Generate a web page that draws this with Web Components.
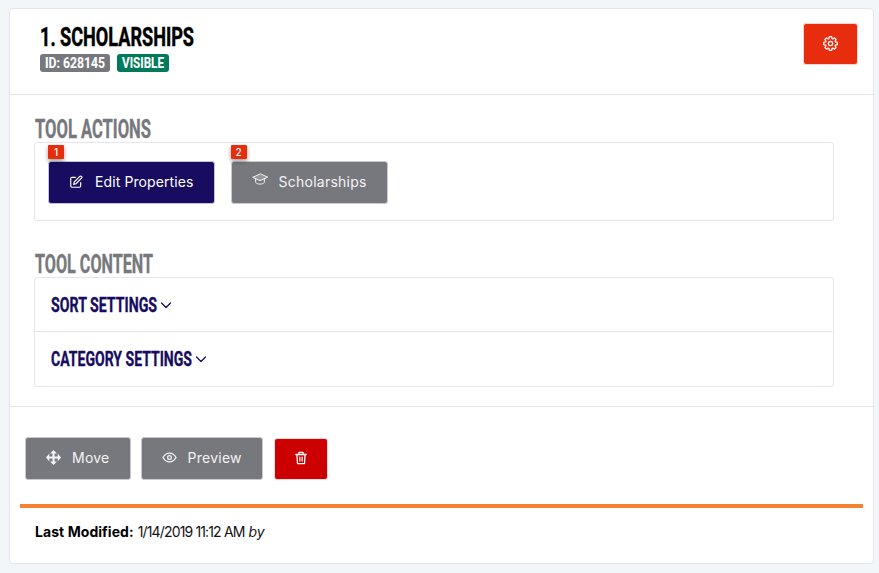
<!DOCTYPE html>
<html>
<head>
<meta charset="utf-8">
<style>
  html, body { margin: 0; height: 573px; overflow: hidden; background: #f3f6f9; }
  body { padding: 8px 5px 8px 9px; box-sizing: border-box; font-family: "Inter", "Liberation Sans", sans-serif; }
</style>
</head>
<body>
<tool-card></tool-card>

<script>
// cog outline with 8 teeth
function gearPath() {
  let d = '';
  for (let i = 0; i < 8; i++) {
    const a = i * Math.PI / 4;
    [[-.32, 8.2], [-.17, 11], [.17, 11], [.32, 8.2]].forEach(([o, r]) => {
      const x = 12 + r * Math.sin(a + o), y = 12 - r * Math.cos(a + o);
      d += (d ? 'L' : 'M') + x.toFixed(2) + ' ' + y.toFixed(2);
    });
  }
  return d + 'z';
}

const ICONS = {
  gear: `<path d="${gearPath()}"/><circle cx="12" cy="12" r="3.4"/>`,
  edit: '<path d="M11 4H5a2 2 0 0 0-2 2v13a2 2 0 0 0 2 2h13a2 2 0 0 0 2-2v-6"/><path d="M18.5 2.5a2.1 2.1 0 0 1 3 3L12 15l-4 1 1-4z"/>',
  grad: '<path d="M12 3L1 8l11 5 11-5z" fill="currentColor" fill-opacity=".25"/><path d="M5.500 10.500v5c2 3.500 11 3.500 13 0v-5"/>',
  move: '<path fill="currentColor" stroke="none" d="M12 0l5.500 5.500h-3.800v5h5V5.500L24 12l-5.300 6.500v-5h-5v5h3.800L12 24l-5.500-5.500h3.800v-5h-5v5L0 12l5.300-6.500v5h5v-5H6.500z"/>',
  eye: '<path d="M1.500 12S5.500 5 12 5s10.500 7 10.500 7-4 7-10.500 7S1.500 12 1.500 12z"/><circle cx="12" cy="12" r="3"/>',
  trash: '<path d="M3 6h18"/><path d="M8.500 6V2.500h7V6"/><path d="M5 6l1 15.500h12L19 6"/><path d="M10 10.500v6.500M14 10.500v6.500"/>',
  chevron: '<path d="M3 8l9 9 9-9"/>'
};

class UiIcon extends HTMLElement {
  connectedCallback() {
    const size = this.getAttribute('size') || 14;
    const sw = this.getAttribute('weight') || 2;
    this.attachShadow({ mode: 'open' }).innerHTML = `
      <style>:host { display: inline-flex; } svg { display: block; }</style>
      <svg width="${size}" height="${size}" viewBox="0 0 24 24" fill="none" stroke="currentColor"
        stroke-width="${sw}" stroke-linecap="round" stroke-linejoin="round">${ICONS[this.getAttribute('name')]}</svg>`;
  }
}
customElements.define('ui-icon', UiIcon);

// heading font is condensed, none installed, so squeeze the text to the wanted width
class CondText extends HTMLElement {
  connectedCallback() {
    const w = +this.getAttribute('w');
    this.attachShadow({ mode: 'open' }).innerHTML = `
      <style>
        :host { display: inline-block; width: ${w}px; white-space: nowrap; font-family: Roboto, "Liberation Sans", sans-serif;
          font-weight: 700; -webkit-text-stroke: var(--stroke, .35px) currentColor; }
        span { display: inline-block; transform-origin: 0 50%; }
      </style>
      <span><slot></slot></span>`;
    const span = this.shadowRoot.querySelector('span');
    span.style.transform = `scaleX(${w / span.getBoundingClientRect().width})`;
  }
}
customElements.define('cond-text', CondText);

class UiButton extends HTMLElement {
  connectedCallback() {
    const num = this.getAttribute('num');
    this.attachShadow({ mode: 'open' }).innerHTML = `
      <style>
        :host { display: inline-flex; position: relative; height: 43px; box-sizing: border-box; align-items: center;
          gap: var(--gap, 12px); padding: 0 var(--pad, 20px) 2px; border: 1px solid #c9c9ce; border-radius: 3px;
          background: #77787d; color: #f3f3f5; font-size: 14px; letter-spacing: .25px; white-space: nowrap; }
        :host([kind="navy"]) { background: #170c60; border-color: #c5c1e3; color: #fff; letter-spacing: .1px; }
        :host([kind="red"]) { background: #e82c0e; border-color: #fbd3cb; color: #fff; height: 42px; }
        :host([kind="dark-red"]) { background: #cc0000; border-color: #f6dddd; color: #fff; height: 42px; }
        .num { position: absolute; left: -1px; top: -17px; width: 16px; height: 14px; background: #e82c0e; color: #fff;
          font-size: 10px; font-weight: 500; line-height: 14px; text-align: center; border-radius: 1px; letter-spacing: 0;
          box-shadow: 0 2px 4px rgba(0,0,0,.4); }
      </style>
      ${num ? `<span class="num">${num}</span>` : ''}<slot></slot>`;
  }
}
customElements.define('ui-button', UiButton);

class UiSection extends HTMLElement {
  connectedCallback() {
    this.attachShadow({ mode: 'open' }).innerHTML = `
      <style>
        :host { display: block; width: 800px; }
        h3 { margin: 0; height: 24px; padding-left: 1px; font-size: 25px; line-height: 23px; font-weight: 700; color: #77787d; }
        .box { border: 1px solid #e4e6ef; border-radius: 3px; background: #fff; }
      </style>
      <h3><cond-text w="${this.getAttribute('w')}">${this.getAttribute('heading')}</cond-text></h3>
      <div class="box"><slot></slot></div>`;
  }
}
customElements.define('ui-section', UiSection);

class UiRow extends HTMLElement {
  connectedCallback() {
    this.attachShadow({ mode: 'open' }).innerHTML = `
      <style>
        :host { display: flex; align-items: center; gap: 3px; height: 54px; box-sizing: border-box; padding-left: 16px; color: #170c60; font-size: 21px; }
        :host(:not(:last-child)) { border-bottom: 1px solid #e4e6ef; }
      </style>
      <cond-text w="${this.getAttribute('w')}"><slot></slot></cond-text><ui-icon name="chevron" size="12" weight="2.600"></ui-icon>`;
  }
}
customElements.define('ui-row', UiRow);

class ToolCard extends HTMLElement {
  connectedCallback() {
    this.attachShadow({ mode: 'open' }).innerHTML = `
      <style>
        :host { display: block; height: 556px; box-sizing: border-box; background: #fff; border: 1px solid #e4e6ef; border-radius: 4px; }
        header { display: flex; justify-content: space-between; height: 86px; box-sizing: border-box;
          padding: 14px 15px 0 30px; border-bottom: 1px solid #e4e6ef; }
        h2 { margin: 1px 0 0; font-size: 26px; line-height: 26px; color: #000; --stroke: .5px; }
        .tags { display: flex; gap: 7px; margin-top: 4px; }
        .tag { height: 18px; padding: 0 5px; border-radius: 3px; background: #77787d; color: #fff; font-size: 15px; line-height: 18px; --stroke: .1px; }
        .tag.green { background: #007a5a; }
        main { height: 312px; box-sizing: border-box; padding: 23px 0 0 24px; border-bottom: 1px solid #e4e6ef; }
        .actions { display: flex; gap: 16px; height: 77px; box-sizing: border-box; padding: 18px 0 0 13px; }
        ui-section + ui-section { margin-top: 32px; }
        .foot { display: flex; gap: 10px; padding: 30px 0 0 15px; align-items: flex-start; height: 43px; }
        .foot ui-button:nth-child(3) { margin: 1px 0 0 1px; width: 54px; justify-content: center; }
        hr { height: 4px; margin: 24px 10px 0; border: 0; background: #f58233; }
        .mod { margin: 15px 0 0 25px; font-size: 14px; color: #111; }
        .mod b { color: #000; letter-spacing: .06px; }
        .date { letter-spacing: -.85px; }
      </style>
      <header>
        <div>
          <h2><cond-text w="154">1. SCHOLARSHIPS</cond-text></h2>
          <div class="tags"><span class="tag"><cond-text w="60">ID: 628145</cond-text></span><span class="tag green"><cond-text w="42">VISIBLE</cond-text></span></div>
        </div>
        <ui-button kind="red" style="width:55px;justify-content:center"><ui-icon name="gear" size="15"></ui-icon></ui-button>
      </header>
      <main>
        <ui-section heading="TOOL ACTIONS" w="116">
          <div class="actions">
            <ui-button kind="navy" num="1"><ui-icon name="edit" size="14"></ui-icon>Edit Properties</ui-button>
            <ui-button num="2" style="--gap:11px"><ui-icon name="grad" size="16" weight="1.500" style="margin-top:-3px"></ui-icon>Scholarships</ui-button>
          </div>
        </ui-section>
        <ui-section heading="TOOL CONTENT" w="118">
          <ui-row w="106">SORT SETTINGS</ui-row>
          <ui-row w="141">CATEGORY SETTINGS</ui-row>
        </ui-section>
      </main>
      <div class="foot">
        <ui-button style="--gap:11px"><ui-icon name="move" size="15"></ui-icon>Move</ui-button>
        <ui-button style="--gap:11px"><ui-icon name="eye" size="15"></ui-icon>Preview</ui-button>
        <ui-button kind="dark-red"><ui-icon name="trash" size="14" weight="2.200"></ui-icon></ui-button>
      </div>
      <hr>
      <div class="mod"><b>Last Modified:</b> <span class="date">1/14/2019 11:12 AM</span> <i>by</i></div>`;
  }
}
customElements.define('tool-card', ToolCard);
</script>
</body>
</html>
